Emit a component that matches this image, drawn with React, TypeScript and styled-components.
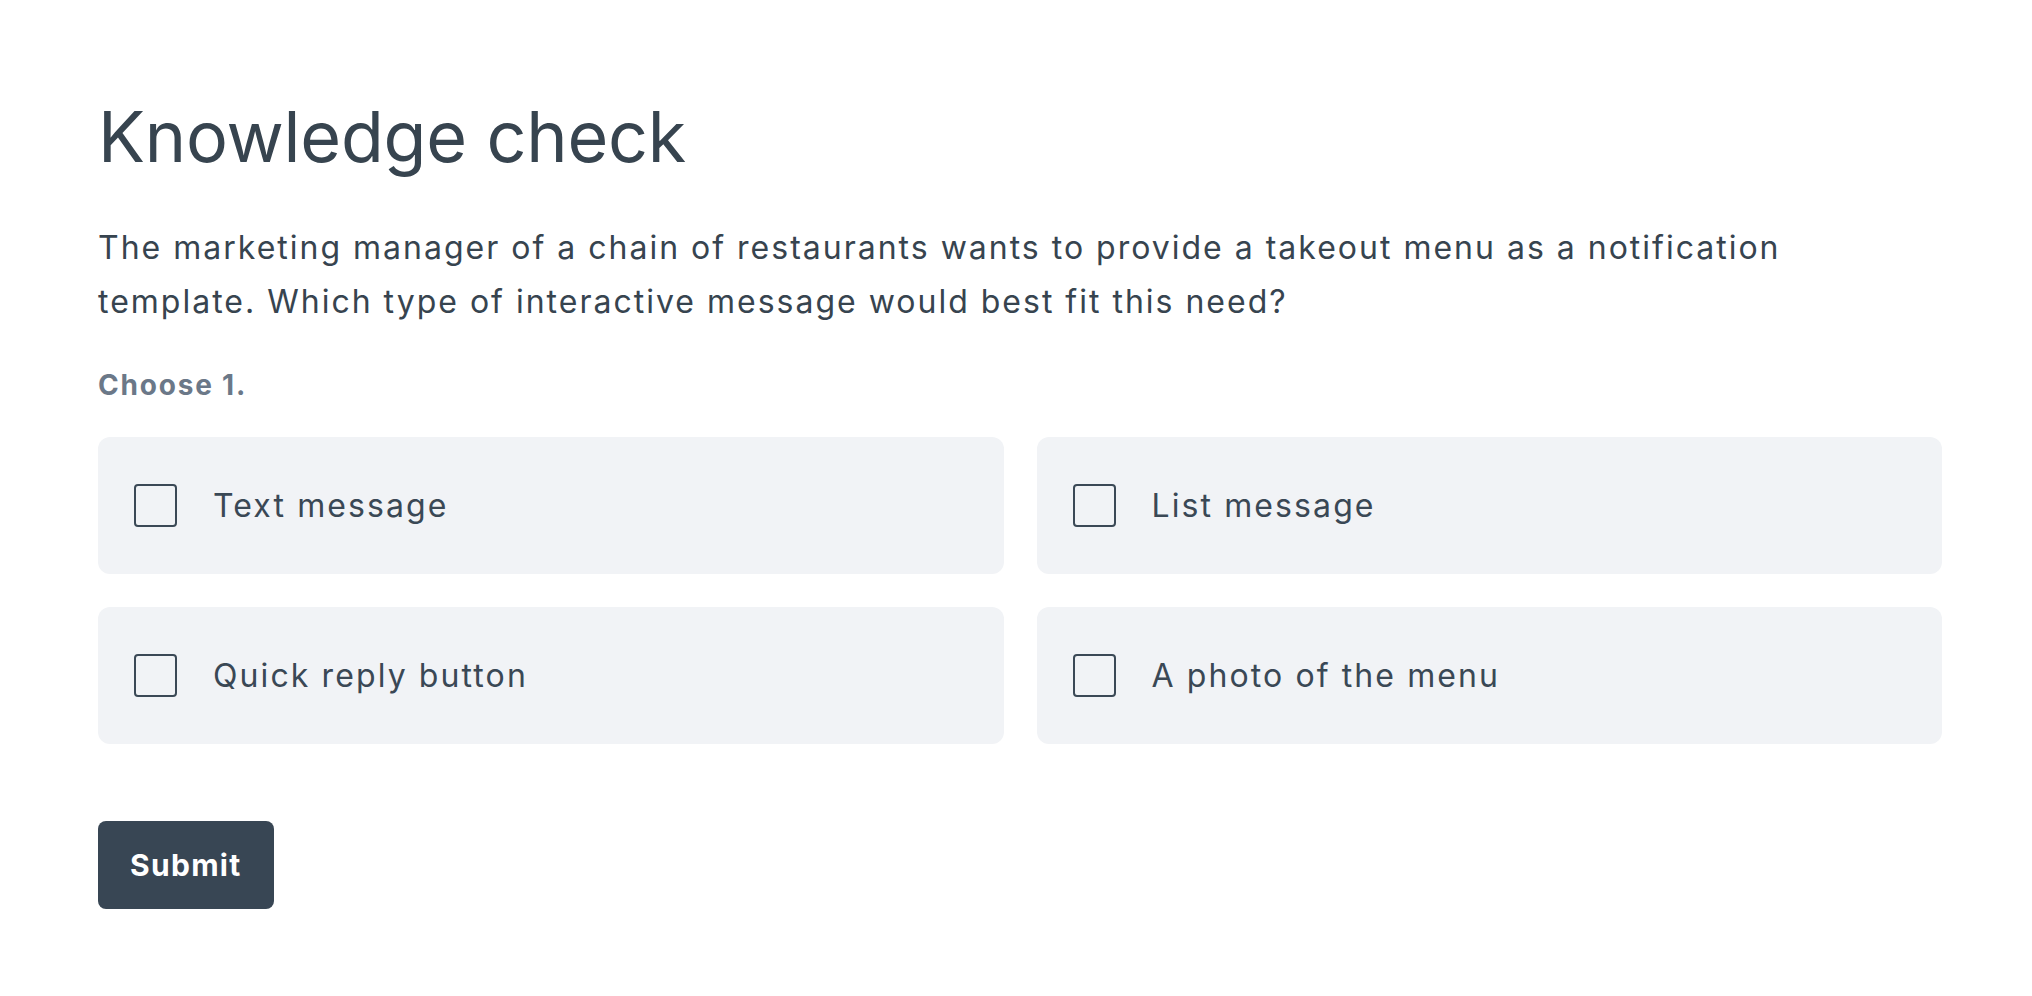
import React from "react";
import styled, { createGlobalStyle } from "styled-components";

const GlobalStyle = createGlobalStyle`
  html, body {
    margin: 0;
    padding: 0;
    background: #ffffff;
    font-family: Inter, "Noto Sans", "Liberation Sans", sans-serif;
    -webkit-font-smoothing: antialiased;
  }
  * { box-sizing: border-box; }
`;

const Page = styled.main`
  padding: 95px 90px 60px 98px;
  color: #384654;
`;

const Title = styled.h1`
  margin: 0;
  font-size: 70px;
  line-height: 84px;
  font-weight: 400;
  color: #37444f;
  letter-spacing: -0.2px;
`;

const Question = styled.p`
  margin: 42px 0 0;
  max-width: 1790px;
  font-size: 32px;
  line-height: 53.5px;
  font-weight: 400;
  letter-spacing: 2px;
  color: #37444f;
`;

const Hint = styled.div`
  margin-top: 37px;
  font-size: 28px;
  line-height: 40px;
  font-weight: 700;
  letter-spacing: 1.8px;
  color: #6b7888;
`;

const Options = styled.div`
  margin-top: 32px;
  display: grid;
  grid-template-columns: 1fr 1fr;
  grid-auto-rows: 137px;
  column-gap: 33px;
  row-gap: 33px;
`;

const Option = styled.label`
  display: flex;
  align-items: center;
  gap: 36px;
  padding: 0 36px;
  background: #f1f3f6;
  border-radius: 12px;
  cursor: pointer;
`;

const Box = styled.span`
  flex: none;
  width: 43px;
  height: 43px;
  border: 2.75px solid #3b4956;
  border-radius: 4px;
  background: transparent;
`;

const OptionText = styled.span`
  font-size: 32px;
  line-height: 40px;
  letter-spacing: 2.1px;
  color: #3a4855;
`;

const SubmitButton = styled.button`
  margin-top: 77px;
  height: 88px;
  padding: 0 32px;
  border: none;
  border-radius: 8px;
  background: #384654;
  color: #ffffff;
  font-family: inherit;
  font-size: 30px;
  font-weight: 700;
  letter-spacing: 1.3px;
  cursor: pointer;
`;

const options = [
  "Text message",
  "List message",
  "Quick reply button",
  "A photo of the menu",
];

export default function App() {
  return (
    <>
      <GlobalStyle />
      <Page>
        <Title>Knowledge check</Title>
        <Question>
          The marketing manager of a chain of restaurants wants to provide a
          takeout menu as a notification template. Which type of interactive
          message would best fit this need?
        </Question>
        <Hint>Choose 1.</Hint>
        <Options>
          {options.map((o) => (
            <Option key={o}>
              <Box />
              <OptionText>{o}</OptionText>
            </Option>
          ))}
        </Options>
        <SubmitButton>Submit</SubmitButton>
      </Page>
    </>
  );
}
